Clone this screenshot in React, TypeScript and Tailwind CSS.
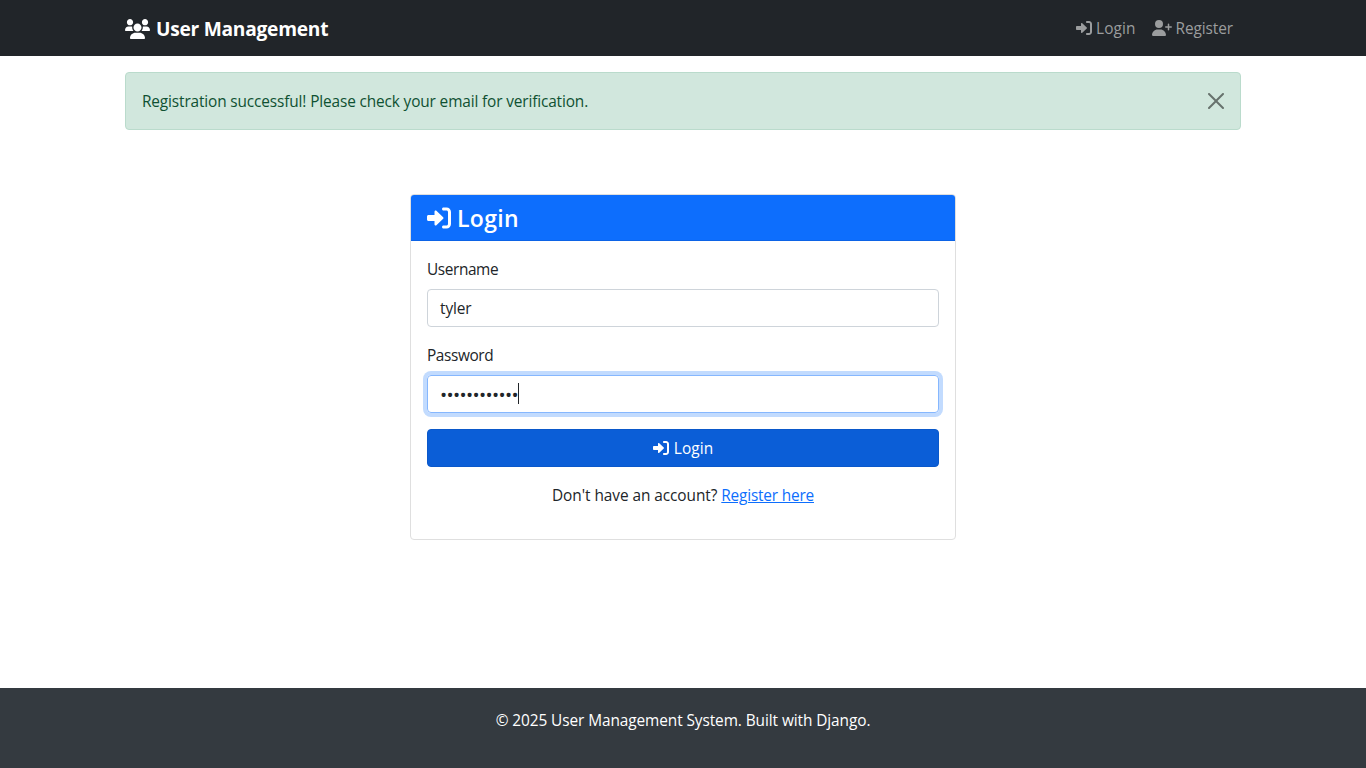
import React from "react";
import { FaUserPlus } from "react-icons/fa6";

function UsersIcon({ className }: { className?: string }) {
  return (
    <svg viewBox="0 0 640 512" fill="currentColor" className={className}>
      <path d="M319.9 320c57.41 0 103.1-46.56 103.1-104c0-57.44-46.54-104-103.1-104c-57.41 0-103.1 46.56-103.1 104C215.9 273.4 262.5 320 319.9 320zM369.9 352H270.1C191.6 352 128 411.7 128 485.3C128 500.1 140.7 512 156.4 512h327.2C499.3 512 512 500.1 512 485.3C512 411.7 448.4 352 369.9 352zM512 160c44.18 0 80-35.82 80-80S556.2 0 512 0c-44.18 0-80 35.82-80 80S467.8 160 512 160zM183.9 216c0-5.449 .9824-10.63 1.609-15.91C174.6 194.1 162.6 192 149.9 192H88.08C39.44 192 0 233.8 0 285.3C0 295.6 7.887 304 17.62 304h199.5C196.7 280.2 183.9 249.7 183.9 216zM128 160c44.18 0 80-35.82 80-80S172.2 0 128 0C83.82 0 48 35.82 48 80S83.82 160 128 160zM551.9 192h-61.84c-12.8 0-24.88 3.037-35.86 8.24C454.8 205.5 455.8 210.6 455.8 216c0 33.71-12.78 64.21-33.16 88h199.7C632.1 304 640 295.6 640 285.3C640 233.8 600.6 192 551.9 192z" />
    </svg>
  );
}

function SignInIcon({ className }: { className?: string }) {
  return (
    <svg viewBox="0 0 512 512" fill="currentColor" className={className}>
      <path d="M344.7 238.5l-144.1-136C193.7 95.97 183.4 94.17 174.6 97.95C165.8 101.8 160.1 110.4 160.1 120V192H32.02C14.33 192 0 206.3 0 224v64c0 17.68 14.33 32 32.02 32h128.1v72c0 9.578 5.707 18.25 14.51 22.05c8.803 3.781 19.03 1.984 26-4.594l144.1-136C354.3 263.8 354.3 248.2 344.7 238.5zM416 32h-64c-17.67 0-32 14.33-32 32s14.33 32 32 32h64c17.67 0 32 14.33 32 32v256c0 17.67-14.33 32-32 32h-64c-17.67 0-32 14.33-32 32s14.33 32 32 32h64c53.02 0 96-42.98 96-96V128C512 74.98 469 32 416 32z" />
    </svg>
  );
}

export default function App() {
  return (
    <div className="flex min-h-screen flex-col bg-white font-['Open_Sans','Noto_Sans',sans-serif] text-[15.4px] leading-[26px] text-[#212529]">
      <nav className="flex h-14 items-center bg-[#212529] pl-[125px] pr-[133px]">
        <a className="flex items-center text-[19.2px] font-bold text-white">
          <UsersIcon className="mt-px h-5 w-[25px]" />
          <span className="ml-[6px] h-6 whitespace-nowrap tracking-[-0.27px]">User Management</span>
        </a>
        <div className="ml-auto flex gap-4 text-[#9b9d9e]">
          <a className="flex items-center">
            <SignInIcon className="h-4 w-4" />
            <span className="ml-1 h-6 whitespace-nowrap tracking-[0.1px]">Login</span>
          </a>
          <a className="flex items-center">
            <FaUserPlus className="h-4 w-5" />
            <span className="ml-1 h-6 whitespace-nowrap tracking-[-0.08px]">Register</span>
          </a>
        </div>
      </nav>

      <main className="flex flex-1 flex-col items-center pt-4">
        <div className="flex h-[58px] w-[1116px] items-center justify-between rounded border border-[#badbcc] bg-[#d1e7dd] px-4 text-[#0f5132]">
          <span className="h-6 whitespace-nowrap tracking-[-0.135px]">Registration successful! Please check your email for verification.</span>
          <button aria-label="Close" className="opacity-50">
            <svg viewBox="0 0 16 16" className="h-4 w-4" fill="#000">
              <path d="M.293.293a1 1 0 0 1 1.414 0L8 6.586 14.293.293a1 1 0 1 1 1.414 1.414L9.414 8l6.293 6.293a1 1 0 0 1-1.414 1.414L8 9.414l-6.293 6.293a1 1 0 0 1-1.414-1.414L6.586 8 .293 1.707a1 1 0 0 1 0-1.414z" />
            </svg>
          </button>
        </div>

        <section className="mt-16 h-[346px] w-[546px] rounded border border-[#dfdfdf] bg-white">
          <header className="flex h-[46px] items-center rounded-t-[3px] border-b border-[#0c63e6] bg-[#0d6efd] px-4 text-white">
            <SignInIcon className="h-6 w-6" />
            <h4 className="ml-1.5 h-7 whitespace-nowrap text-[23px] font-semibold leading-7 tracking-[0.3px]">Login</h4>
          </header>
          <form className="flex flex-col p-4">
            <label className="h-6 whitespace-nowrap tracking-[-0.4px]">Username</label>
            <div className="mt-2 flex h-[38px] items-center rounded border border-[#ced4da] px-3">
              <span className="h-6 tracking-[-0.1px]">tyler</span>
            </div>
            <label className="mt-4 h-6 whitespace-nowrap tracking-[-0.4px]">Password</label>
            <div className="mt-2 flex h-[38px] items-center rounded border border-[#86b7fe] px-3 shadow-[0_0_0_4px_#c2dbfe]">
              <span className="h-6 text-[19px] leading-[27px] tracking-[-0.64px]">••••••••••••</span>
              <span className="mb-px h-[21px] w-px bg-[#212529]" />
            </div>
            <button type="button" className="mt-4 flex h-[38px] items-center justify-center rounded border border-[#0a58ca] bg-[#0b5ed7] text-white">
              <SignInIcon className="h-4 w-4" />
              <span className="ml-[5px] h-6 whitespace-nowrap tracking-[0.1px]">Login</span>
            </button>
            <p className="mt-4 flex h-6 justify-center gap-1 whitespace-nowrap">
              <span className="tracking-[-0.06px]">Don't have an account?</span>
              <a className="tracking-[-0.19px] text-[#0d6efd] underline">Register here</a>
            </p>
          </form>
        </section>
      </main>

      <footer className="flex h-20 justify-center bg-[#343a40] pt-5 text-white">
        <span className="h-6 whitespace-nowrap tracking-[-0.08px]">© 2025 User Management System. Built with Django.</span>
      </footer>
    </div>
  );
}
